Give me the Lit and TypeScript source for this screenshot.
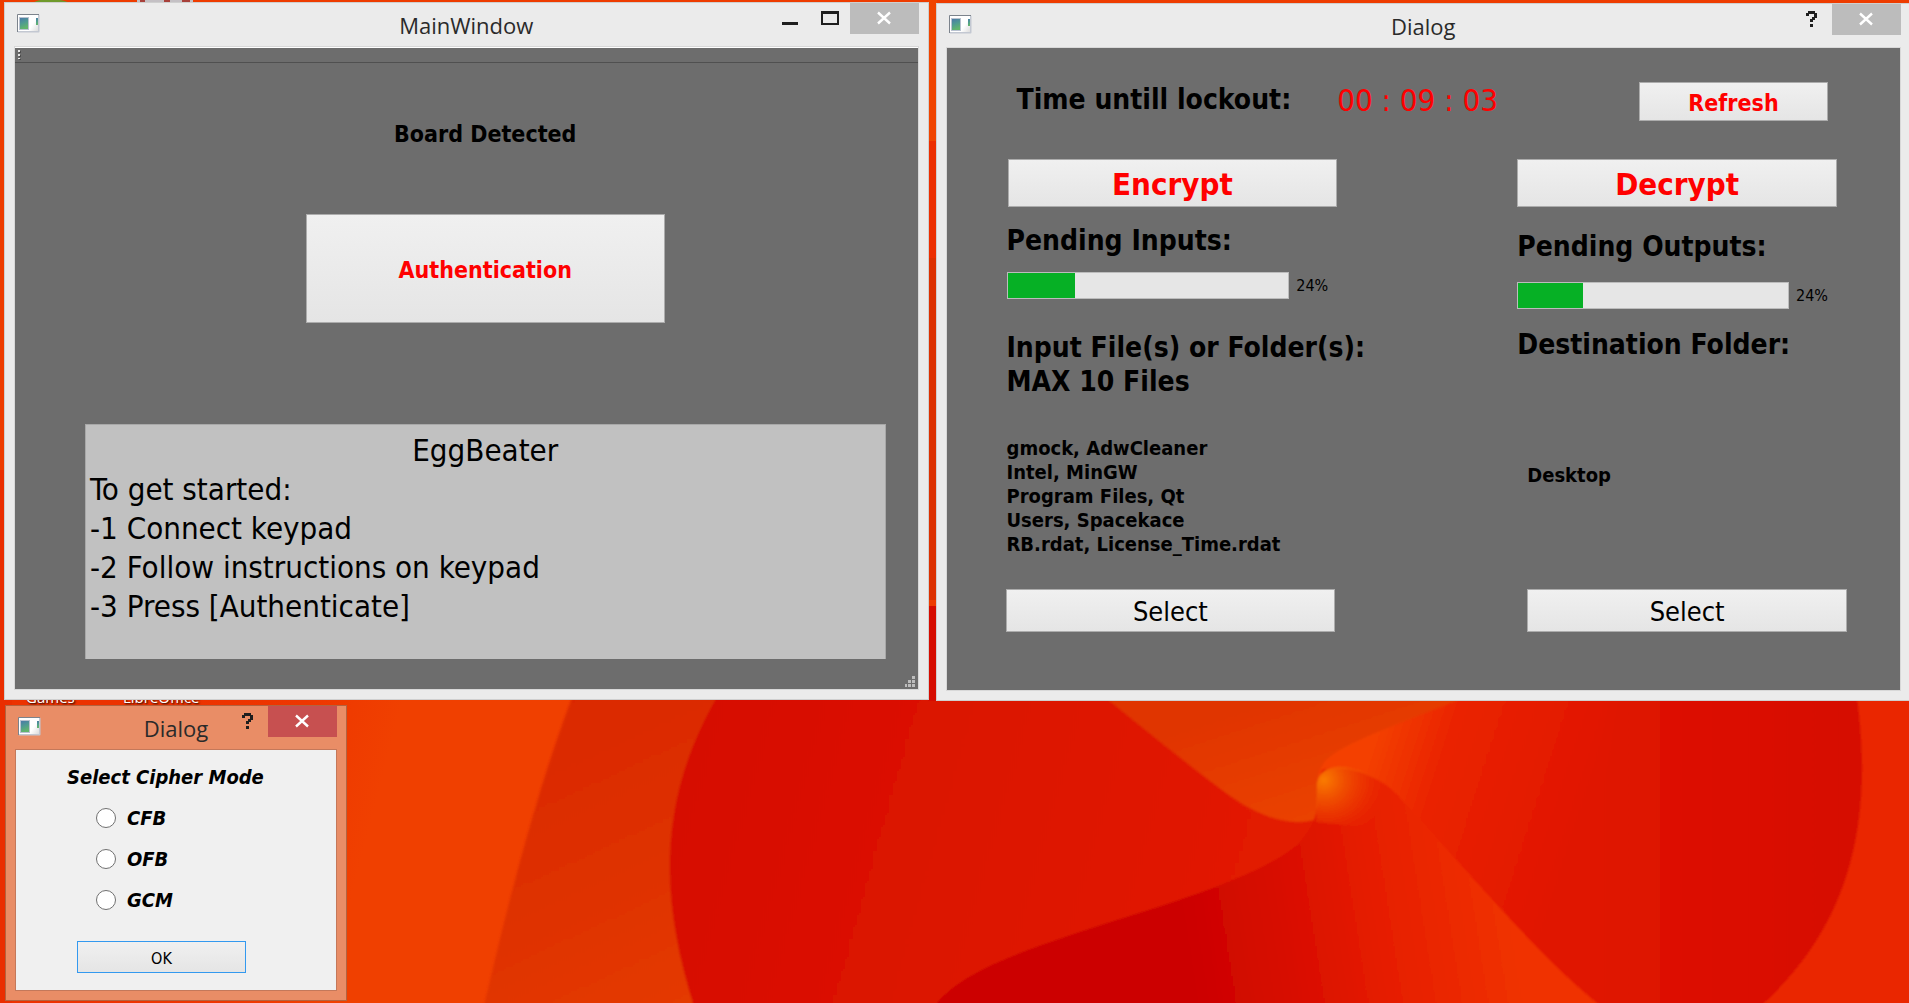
import { LitElement, html, css, svg, nothing } from "lit";
import { customElement, property, state } from "lit/decorators.js";

const appIcon = html`<svg class="app-icon" viewBox="0 0 23 19" aria-hidden="true">
  <defs>
    <linearGradient id="pane" x1="0" y1="0" x2="0.3" y2="1">
      <stop offset="0" stop-color="#4b78a8" />
      <stop offset="0.5" stop-color="#4f9a92" />
      <stop offset="1" stop-color="#62b56c" />
    </linearGradient>
    <linearGradient id="sheet" x1="0" y1="0" x2="1" y2="1">
      <stop offset="0.5" stop-color="#ffffff" />
      <stop offset="1" stop-color="#dcdcdc" />
    </linearGradient>
  </defs>
  <rect x="0.5" y="0.5" width="22" height="18" rx="1" fill="#c3c8d2" />
  <path d="M0.5 18V0.5H22" fill="none" stroke="#7c838c" />
  <rect x="1" y="1" width="20" height="16" fill="#ffffff" />
  <rect x="11" y="2" width="10" height="15" fill="url(#sheet)" />
  <rect x="2" y="3" width="10" height="13" fill="#b9c2d0" />
  <rect x="3" y="4" width="8" height="11" fill="url(#pane)" />
  <rect x="19" y="4" width="2" height="7" fill="url(#pane)" />
</svg>`;

@customElement("desktop-window")
export class DesktopWindow extends LitElement {
  @property() caption = "";
  @property({ type: Boolean, reflect: true }) active = false;
  @property({ type: Boolean }) dialog = false;

  static styles = css`
    :host {
      display: flex;
      flex-direction: column;
      box-sizing: border-box;
      padding: 0 9px 9px;
      background: #ebebeb;
      border: 1px solid #cfcfcf;
      font-family: "Open Sans", "Noto Sans", sans-serif;
      color: #2a2a2a;
    }
    :host([active]) {
      background: #e98d66;
      border-color: #b3633f;
    }
    .bar {
      display: grid;
      grid-template-columns: 1fr auto 1fr;
      height: 43px;
    }
    .app-icon {
      width: 23px;
      height: 19px;
      margin: 11px 0 0 3px;
    }
    .caption {
      margin: 0;
      padding-top: 6px;
      font-size: 22px;
      line-height: 32px;
      font-weight: 400;
    }
    .controls {
      display: flex;
      justify-content: flex-end;
      align-items: flex-start;
    }
    button {
      display: flex;
      padding: 0;
      border: 0;
      background: none;
      color: #1e1e1e;
      height: 31px;
    }
    .minimize,
    .maximize,
    .help {
      width: 39px;
    }
    .close {
      width: 69px;
      background: #bcbcbc;
      color: #ffffff;
    }
    :host([active]) .close {
      background: #c75050;
    }
    button svg {
      width: 100%;
      height: 31px;
    }
    .client {
      flex: 1;
      border: 1px solid #d8d8d8;
    }
    :host([active]) .client {
      border-color: #c4785a;
    }
  `;

  render() {
    return html`
      <header class="bar">
        ${appIcon}
        <h2 class="caption">${this.caption}</h2>
        <div class="controls">
          ${this.dialog
            ? html`<button class="help" aria-label="Help">
                <svg viewBox="0 0 39 31">
                  <path
                    d="M13 12V9H15V7H22V9H24V14H22V16H20V18H17V15H19V13H21V10H16V12ZM17 20H20V23H17Z"
                    fill="currentColor"
                  />
                </svg>
              </button>`
            : html`<button class="minimize" aria-label="Minimize">
                  <svg viewBox="0 0 39 31">
                    <rect x="10" y="19" width="16" height="3" fill="currentColor" />
                  </svg>
                </button>
                <button class="maximize" aria-label="Maximize">
                  <svg viewBox="0 0 39 31">
                    <path
                      d="M10 8H28V22H10ZM12 11V20H26V11Z"
                      fill="currentColor"
                      fill-rule="evenodd"
                    />
                  </svg>
                </button>`}
          <button class="close" aria-label="Close">
            <svg viewBox="0 0 69 31">
              <path d="M28 9.5L40 20.5M40 9.5L28 20.5" stroke="currentColor" stroke-width="2.4" />
            </svg>
          </button>
        </div>
      </header>
      <div class="client"><slot></slot></div>
    `;
  }
}

const controls = css`
  :host {
    display: block;
    font-family: "DejaVu Sans Condensed", "DejaVu Sans", sans-serif;
    color: #000000;
  }
  button {
    box-sizing: border-box;
    display: block;
    padding: 2px 0 0;
    border: 1px solid #acacac;
    background: linear-gradient(#f0f0f0, #e5e5e5);
    font-family: inherit;
    color: inherit;
  }
  .danger {
    font-weight: 700;
    color: #ff0000;
  }
  p,
  h3,
  ul,
  ol {
    margin: 0;
    padding: 0;
    list-style: none;
  }
`;

@customElement("main-panel")
export class MainPanel extends LitElement {
  static styles = [
    controls,
    css`
      :host {
        position: relative;
        background: #6d6d6d;
        border-top: 1px solid #ffffff;
      }
      .toolbar {
        display: flex;
        height: 14px;
        border-bottom: 1px solid #505050;
      }
      .handle {
        width: 3px;
        height: 12px;
        margin: 2px 0 0 3px;
      }
      .body {
        display: flex;
        flex-direction: column;
        align-items: center;
        padding: 57px 32px 30px 70px;
      }
      .status {
        font-size: 23px;
        line-height: 28px;
        font-weight: 700;
      }
      .auth {
        width: 359px;
        height: 109px;
        margin: 66px 0 101px;
        font-size: 23px;
      }
      .guide {
        box-sizing: border-box;
        width: 100%;
        padding: 6px 4px 33px;
        border: 1px solid #a8a8a8;
        border-bottom: 0;
        background: #c1c1c1;
        font-size: 31px;
        line-height: 39px;
      }
      .guide h3 {
        font-size: 31px;
        font-weight: 400;
        text-align: center;
      }
      .grip {
        position: absolute;
        right: 3px;
        bottom: 2px;
        width: 11px;
        height: 11px;
      }
    `,
  ];

  render() {
    return html`
      <div class="toolbar">
        <svg class="handle" viewBox="0 0 3 12" aria-hidden="true">
          <path d="M1 1H3V3H1ZM1 5H3V7H1ZM1 9H3V10H1Z" fill="#4c4c4c" />
          <path d="M0 0H2V2H0ZM0 4H2V6H0ZM0 8H2V9H0Z" fill="#e6e6e6" />
        </svg>
      </div>
      <div class="body">
        <p class="status">Board Detected</p>
        <button class="auth danger">Authentication</button>
        <section class="guide">
          <h3>EggBeater</h3>
          <p>To get started:</p>
          <ol>
            <li>-1 Connect keypad</li>
            <li>-2 Follow instructions on keypad</li>
            <li>-3 Press [Authenticate]</li>
          </ol>
        </section>
      </div>
      <svg class="grip" viewBox="0 0 11 11" aria-hidden="true">
        <path
          d="M8 0H11V3H8ZM4 4H7V7H4ZM8 4H11V7H8ZM1 8H3V11H1ZM4 8H7V11H4ZM8 8H11V11H8Z"
          fill="#bdbdbd"
        />
      </svg>
    `;
  }
}

@customElement("cipher-panel")
export class CipherPanel extends LitElement {
  @state() private pendingInputs = 24;
  @state() private pendingOutputs = 24;
  @state() private remaining = ["00", "09", "03"];
  @state() private inputs = [
    "gmock, AdwCleaner",
    "Intel, MinGW",
    "Program Files, Qt",
    "Users, Spacekace",
    "RB.rdat, License_Time.rdat",
  ];

  static styles = [
    controls,
    css`
      :host {
        background: #6d6d6d;
        padding: 34px 53px 58px 60px;
      }
      .top {
        display: flex;
        align-items: flex-start;
        padding: 0 19px 0 10px;
        gap: 46px;
      }
      .heading {
        font-size: 28px;
        line-height: 34px;
        font-weight: 700;
        white-space: nowrap;
      }
      .top .heading,
      .timer {
        line-height: 36px;
      }
      .timer {
        font-size: 31px;
        color: #ff0000;
      }
      .refresh {
        width: 189px;
        height: 39px;
        margin-left: auto;
        font-size: 23px;
      }
      .columns {
        display: grid;
        grid-template-columns: minmax(0, 330fr) minmax(0, 329fr);
        column-gap: 180px;
        padding-top: 38px;
      }
      .column {
        display: flex;
        flex-direction: column;
      }
      .run {
        height: 48px;
        font-size: 31px;
      }
      .sources .run {
        margin-left: 1px;
      }
      .target .run {
        margin-right: 10px;
      }
      .meter {
        display: flex;
        align-items: center;
        gap: 7px;
        font-size: 16px;
        line-height: 27px;
      }
      progress {
        appearance: none;
        box-sizing: border-box;
        flex: 1;
        min-width: 0;
        height: 27px;
        border: 1px solid #bcbcbc;
        background: #e6e6e6;
      }
      progress::-webkit-progress-bar {
        background: #e6e6e6;
      }
      progress::-webkit-progress-value {
        background: #06b025;
      }
      .percent {
        width: 41px;
      }
      .files {
        font-size: 20px;
        line-height: 24px;
        font-weight: 700;
      }
      .select {
        height: 43px;
        font-size: 27px;
      }
      .sources .pending {
        margin: 17px 0 14px;
      }
      .sources .what {
        margin: 32px 0 37px;
      }
      .sources .select {
        margin: 33px 2px 0 -1px;
      }
      .target .pending {
        margin: 23px 0 18px;
      }
      .target .what {
        margin: 19px 0 101px;
      }
      .target .meter {
        padding-right: 10px;
      }
      .target .files {
        margin-left: 10px;
      }
      .target .select {
        margin: 102px 0 0 10px;
      }
    `,
  ];

  render() {
    return html`
      <div class="top">
        <p class="heading">Time untill lockout:</p>
        <time class="timer">${this.remaining.join(" : ")}</time>
        <button class="refresh danger">Refresh</button>
      </div>
      <div class="columns">
        <section class="column sources">
          <button class="run danger">Encrypt</button>
          <label class="heading pending" for="inputs">Pending Inputs:</label>
          <div class="meter">
            <progress id="inputs" max="100" value=${this.pendingInputs}></progress>
            <span class="percent">${this.pendingInputs}%</span>
          </div>
          <h3 class="heading what">Input File(s) or Folder(s):<br />MAX 10 Files</h3>
          <ul class="files">
            ${this.inputs.map((line) => html`<li>${line}</li>`)}
          </ul>
          <button class="select">Select</button>
        </section>
        <section class="column target">
          <button class="run danger">Decrypt</button>
          <label class="heading pending" for="outputs">Pending Outputs:</label>
          <div class="meter">
            <progress id="outputs" max="100" value=${this.pendingOutputs}></progress>
            <span class="percent">${this.pendingOutputs}%</span>
          </div>
          <h3 class="heading what">Destination Folder:</h3>
          <p class="files">Desktop</p>
          <button class="select">Select</button>
        </section>
      </div>
    `;
  }
}

@customElement("mode-panel")
export class ModePanel extends LitElement {
  @state() private mode = "";

  static styles = [
    controls,
    css`
      :host {
        background: #f0f0f0;
      }
      form {
        display: flex;
        flex-direction: column;
        padding: 14px 90px 17px 61px;
      }
      fieldset {
        display: contents;
      }
      legend,
      label {
        font-size: 20px;
        font-weight: 700;
        font-style: italic;
        white-space: nowrap;
      }
      legend {
        padding: 0;
        margin: 0 0 18px -10px;
        line-height: 26px;
      }
      label {
        display: flex;
        align-items: center;
        gap: 11px;
        height: 20px;
        line-height: 20px;
        margin: 0 0 21px 19px;
      }
      input {
        appearance: none;
        box-sizing: border-box;
        width: 20px;
        height: 20px;
        margin: 0;
        border: 1px solid #707070;
        border-radius: 50%;
        background: #ffffff;
      }
      input:checked {
        background: radial-gradient(#222222 0 5px, #ffffff 6px);
      }
      .ok {
        height: 32px;
        margin-top: 10px;
        border-color: #3399ef;
        font-size: 16px;
      }
    `,
  ];

  render() {
    return html`
      <form @submit=${(e: Event) => e.preventDefault()}>
        <fieldset>
          <legend>Select Cipher Mode</legend>
          ${["CFB", "OFB", "GCM"].map(
            (name) => html`<label>
              <input
                type="radio"
                name="mode"
                value=${name}
                .checked=${this.mode === name}
                @change=${() => (this.mode = name)}
              />${name}
            </label>`
          )}
        </fieldset>
        <button class="ok">OK</button>
      </form>
    `;
  }
}

const stop = (offset: number, color: string, opacity = 1) =>
  svg`<stop offset=${offset} stop-color=${color} stop-opacity=${opacity === 1 ? nothing : opacity} />`;

const wallpaper = html`<svg
  class="wallpaper"
  viewBox="0 0 1909 1003"
  preserveAspectRatio="none"
  aria-hidden="true"
>
  <defs>
    <linearGradient id="dawn" gradientUnits="userSpaceOnUse" x1="340" y1="0" x2="570" y2="60">
      ${stop(0, "#ec3200")}${stop(0.6, "#ee3600")}${stop(1, "#f04000")}
    </linearGradient>
    <linearGradient id="band" gradientUnits="userSpaceOnUse" x1="540" y1="700" x2="680" y2="1003">
      ${stop(0, "#da2800")}${stop(0.5, "#de3000")}${stop(1, "#e43a00")}
    </linearGradient>
    <linearGradient id="body" gradientUnits="userSpaceOnUse" x1="680" y1="700" x2="1250" y2="860">
      ${stop(0, "#d60a00")}${stop(0.5, "#dc1400")}${stop(1, "#e21a00")}
    </linearGradient>
    <linearGradient id="petal" gradientUnits="userSpaceOnUse" x1="1250" y1="700" x2="1290" y2="822">
      ${stop(0, "#e03400")}${stop(0.6, "#e63c00")}${stop(1, "#ea4200")}
    </linearGradient>
    <linearGradient id="wing" gradientUnits="userSpaceOnUse" x1="1380" y1="720" x2="1600" y2="790">
      ${stop(0, "#f44000")}${stop(0.3, "#ea2400")}${stop(1, "#e01400")}
    </linearGradient>
    <linearGradient id="wingEdge" gradientUnits="userSpaceOnUse" x1="1600" y1="0" x2="1862" y2="0">
      ${stop(0, "#d60a00", 0)}${stop(1, "#d60a00")}
    </linearGradient>
    <linearGradient id="fold" gradientUnits="userSpaceOnUse" x1="1180" y1="900" x2="1500" y2="850">
      ${stop(0, "#cc0300")}${stop(0.3, "#d80c00")}${stop(0.6, "#e61e00")}${stop(1, "#f03200")}
    </linearGradient>
    <radialGradient id="glow" gradientUnits="userSpaceOnUse" cx="1324" cy="780" r="62">
      ${stop(0, "#fa7c00")}${stop(0.3, "#f46000", 0.8)}${stop(1, "#f03c00", 0)}
    </radialGradient>
    <filter id="soft"><feGaussianBlur stdDeviation="1.2" /></filter>
  </defs>
  <rect width="1909" height="1003" fill="#ee3c00" />
  <path d="M0 470H12V1003H0Z" fill="#ea2e00" />
  <rect x="12" y="690" width="600" height="313" fill="url(#dawn)" />
  <g filter="url(#soft)">
    <path d="M575 690C548 760 520 850 483 1010H760V690Z" fill="url(#band)" />
    <path d="M721 690C655 800 660 900 695 1010H1400V690Z" fill="url(#body)" />
    <path
      d="M1096 690C1160 742 1205 778 1232 797C1262 818 1290 826 1314 820C1322 800 1312 780 1325 762C1350 742 1410 722 1480 690Z"
      fill="url(#petal)"
    />
    <path
      d="M1480 690C1420 718 1350 738 1326 760C1314 775 1318 785 1322 795L1500 1010H1920V690Z"
      fill="url(#wing)"
    />
    <path d="M1480 690H1920V1010H1600C1530 940 1440 850 1370 770Z" fill="url(#wingEdge)" />
    <path
      d="M1318 785C1319 805 1318 822 1300 842C1270 872 1180 900 1110 922C1030 948 955 972 932 1010H1606C1540 960 1450 850 1400 798C1384 778 1350 764 1322 770Z"
      fill="url(#fold)"
    />
    <path
      d="M1317 790C1315 768 1335 764 1352 768C1376 774 1390 786 1402 800L1390 830L1316 822Z"
      fill="url(#glow)"
    />
    <path d="M1856 690C1872 800 1862 920 1756 1010H1920V690Z" fill="#ea2600" />
  </g>
  <path d="M928 0H937V141H928Z" fill="#f04400" />
  <path d="M928 141H937V258H928Z" fill="#ec2e00" />
  <path d="M928 258H937V600H928Z" fill="#dc3000" />
  <path d="M928 606H937V701H928Z" fill="#d60c00" />
  <path d="M33 3C38 -2 62 -2 69 3Z" fill="#6f9a2c" />
  <path d="M137 0H193V2H137Z" fill="#c4c0c4" />
  <path d="M140 0H145V2H140ZM164 0H170V2H164ZM182 0H190V2H182Z" fill="#a8403a" />
</svg>`;

@customElement("app-root")
export class AppRoot extends LitElement {
  static styles = css`
    :host {
      display: block;
      position: relative;
      height: 100vh;
      overflow: hidden;
      background: #ee3c00;
    }
    .wallpaper {
      position: absolute;
      inset: 0;
      width: 100%;
      height: 100%;
    }
    desktop-window {
      position: absolute;
    }
    .main {
      left: 4px;
      top: 2px;
      width: calc(50% - 30px);
    }
    .cipher {
      right: -2px;
      top: 3px;
      width: calc(50% + 21px);
    }
    .mode {
      left: 5px;
      top: 705px;
      width: 342px;
    }
    .shortcut {
      position: absolute;
      top: 687px;
      font-family: "Open Sans", sans-serif;
      font-size: 15px;
      line-height: 20px;
      color: #ffffff;
      text-shadow: 1px 1px 2px #000000;
    }
    .first {
      left: 26px;
    }
    .second {
      left: 123px;
    }
  `;

  render() {
    return html`
      ${wallpaper}
      <span class="shortcut first">Games</span>
      <span class="shortcut second">LibreOffice</span>
      <desktop-window class="main" caption="MainWindow">
        <main-panel></main-panel>
      </desktop-window>
      <desktop-window class="cipher" caption="Dialog" dialog>
        <cipher-panel></cipher-panel>
      </desktop-window>
      <desktop-window class="mode" caption="Dialog" dialog active>
        <mode-panel></mode-panel>
      </desktop-window>
    `;
  }
}
